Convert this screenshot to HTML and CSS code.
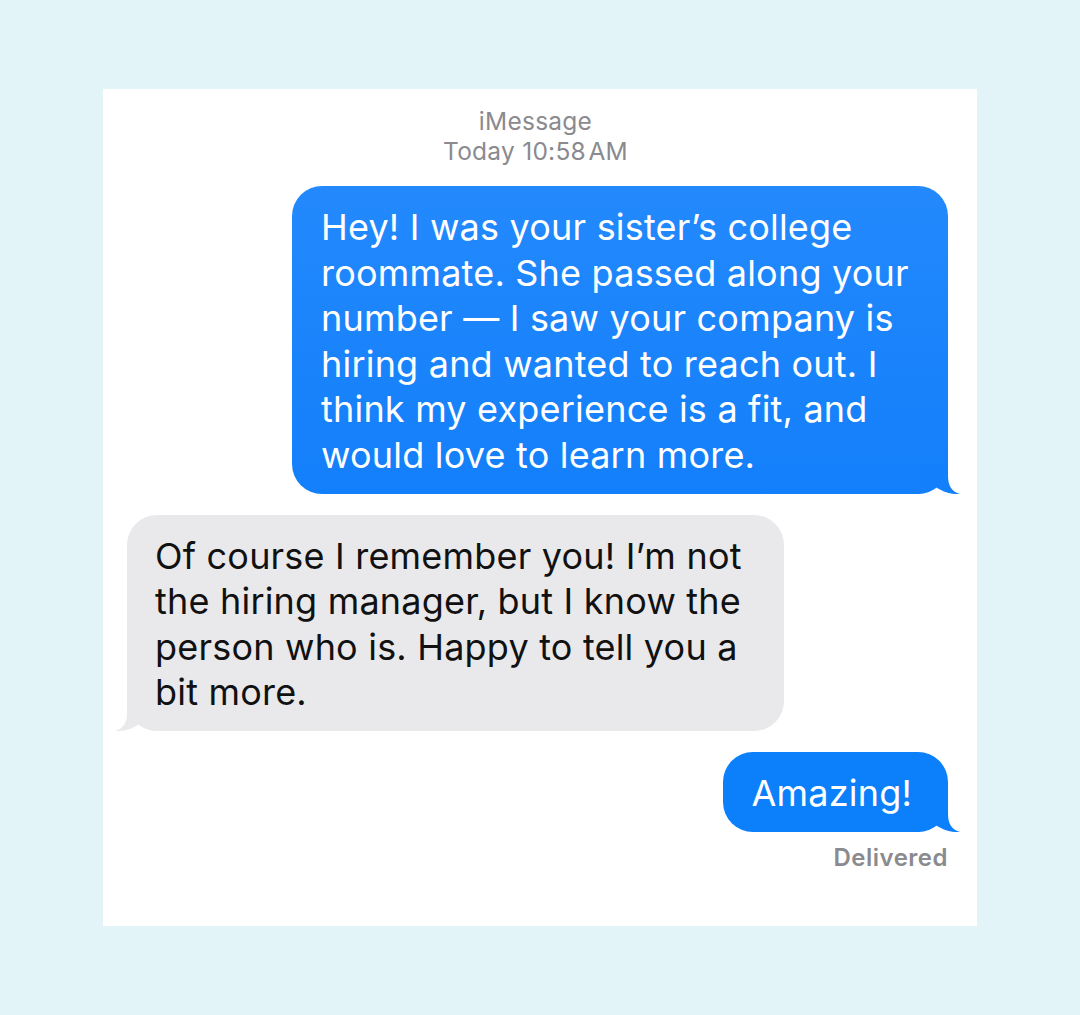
FILE: index.html
```html
<!DOCTYPE html>
<html>
<head>
<meta charset="utf-8">
<link rel="stylesheet" href="styles.css">
</head>
<body>
<div class="card">
  <div class="meta">
    <div>iMessage</div>
    <div>Today 10:58&#8202;AM</div>
  </div>
  <div class="row sent">
    <div class="bubble blue wide">
      Hey! I was your sister’s college<br>roommate. She passed along your<br>number — I saw your company is<br>hiring and wanted to reach out. I<br>think my experience is a fit, and<br>would love to learn more.
      <svg class="tail tail-r" width="44" height="30" viewBox="0 0 44 30"><path d="M0 0 H30 V12 C30 22 34 28 42 30 C36 30.6 24 29 14 20 C10 25 6 29 0 30 Z" fill="currentColor"/></svg>
    </div>
  </div>
  <div class="row recv">
    <div class="bubble gray">
      Of course I remember you! I’m not<br>the hiring manager, but I know the<br>person who is. Happy to tell you a<br>bit more.
      <svg class="tail tail-l" width="44" height="30" viewBox="0 0 44 30"><path d="M44 0 H14 V12 C14 22 10 28 2 30 C8 30.6 20 29 30 20 C34 25 38 29 44 30 Z" fill="currentColor"/></svg>
    </div>
  </div>
  <div class="row sent">
    <div class="bubble blue short">
      Amazing!
      <svg class="tail tail-r" width="44" height="30" viewBox="0 0 44 30"><path d="M0 0 H30 V12 C30 22 34 28 42 30 C36 30.6 24 29 14 20 C10 25 6 29 0 30 Z" fill="currentColor"/></svg>
    </div>
  </div>
  <div class="status">Delivered</div>
</div>
</body>
</html>
```
FILE: styles.css
```css
html, body {
  margin: 0;
  padding: 0;
  background: #e3f4f8;
}
body {
  font-family: "Inter", "Liberation Sans", sans-serif;
}
.card {
  width: 874px;
  height: 837px;
  margin: 89px 0 0 103px;
  background: #ffffff;
  box-sizing: border-box;
  padding: 17px 29px 0 24px;
  display: flex;
  flex-direction: column;
}
.meta {
  text-align: center;
  color: #8a8a8f;
  font-size: 24.5px;
  line-height: 30px;
  font-weight: 400;
  letter-spacing: 0.25px;
  margin-left: -4px;
  margin-bottom: 20px;
}
.row {
  display: flex;
}
.row.sent {
  justify-content: flex-end;
}
.row.recv {
  justify-content: flex-start;
}
.bubble {
  position: relative;
  font-size: 36px;
  line-height: 45.6px;
  letter-spacing: 0.2px;
  white-space: nowrap;
  border-radius: 30px;
}
.blue {
  color: #ffffff;
  background: linear-gradient(#2389fd, #137ffa);
}
.blue .tail {
  color: #137ffa;
}
.gray {
  color: #111111;
  background: #e9e9eb;
  margin-top: 21px;
  padding: 19px 42px 15px 28px;
}
.gray .tail {
  color: #e9e9eb;
}
.wide {
  width: 656px;
  box-sizing: border-box;
  padding: 19px 20px 15px 29px;
}
.short {
  margin-top: 21px;
  padding: 19px 36px 15px 29px;
  background: #0b80fa;
}
.short .tail {
  color: #0b80fa;
}
.tail {
  position: absolute;
  bottom: 0;
}
.tail-r {
  right: -14px;
}
.tail-l {
  left: -14px;
}
.status {
  text-align: right;
  color: #8a8a8f;
  font-size: 24px;
  line-height: 30px;
  font-weight: 600;
  letter-spacing: 0.5px;
  margin-top: 11px;
}
```
